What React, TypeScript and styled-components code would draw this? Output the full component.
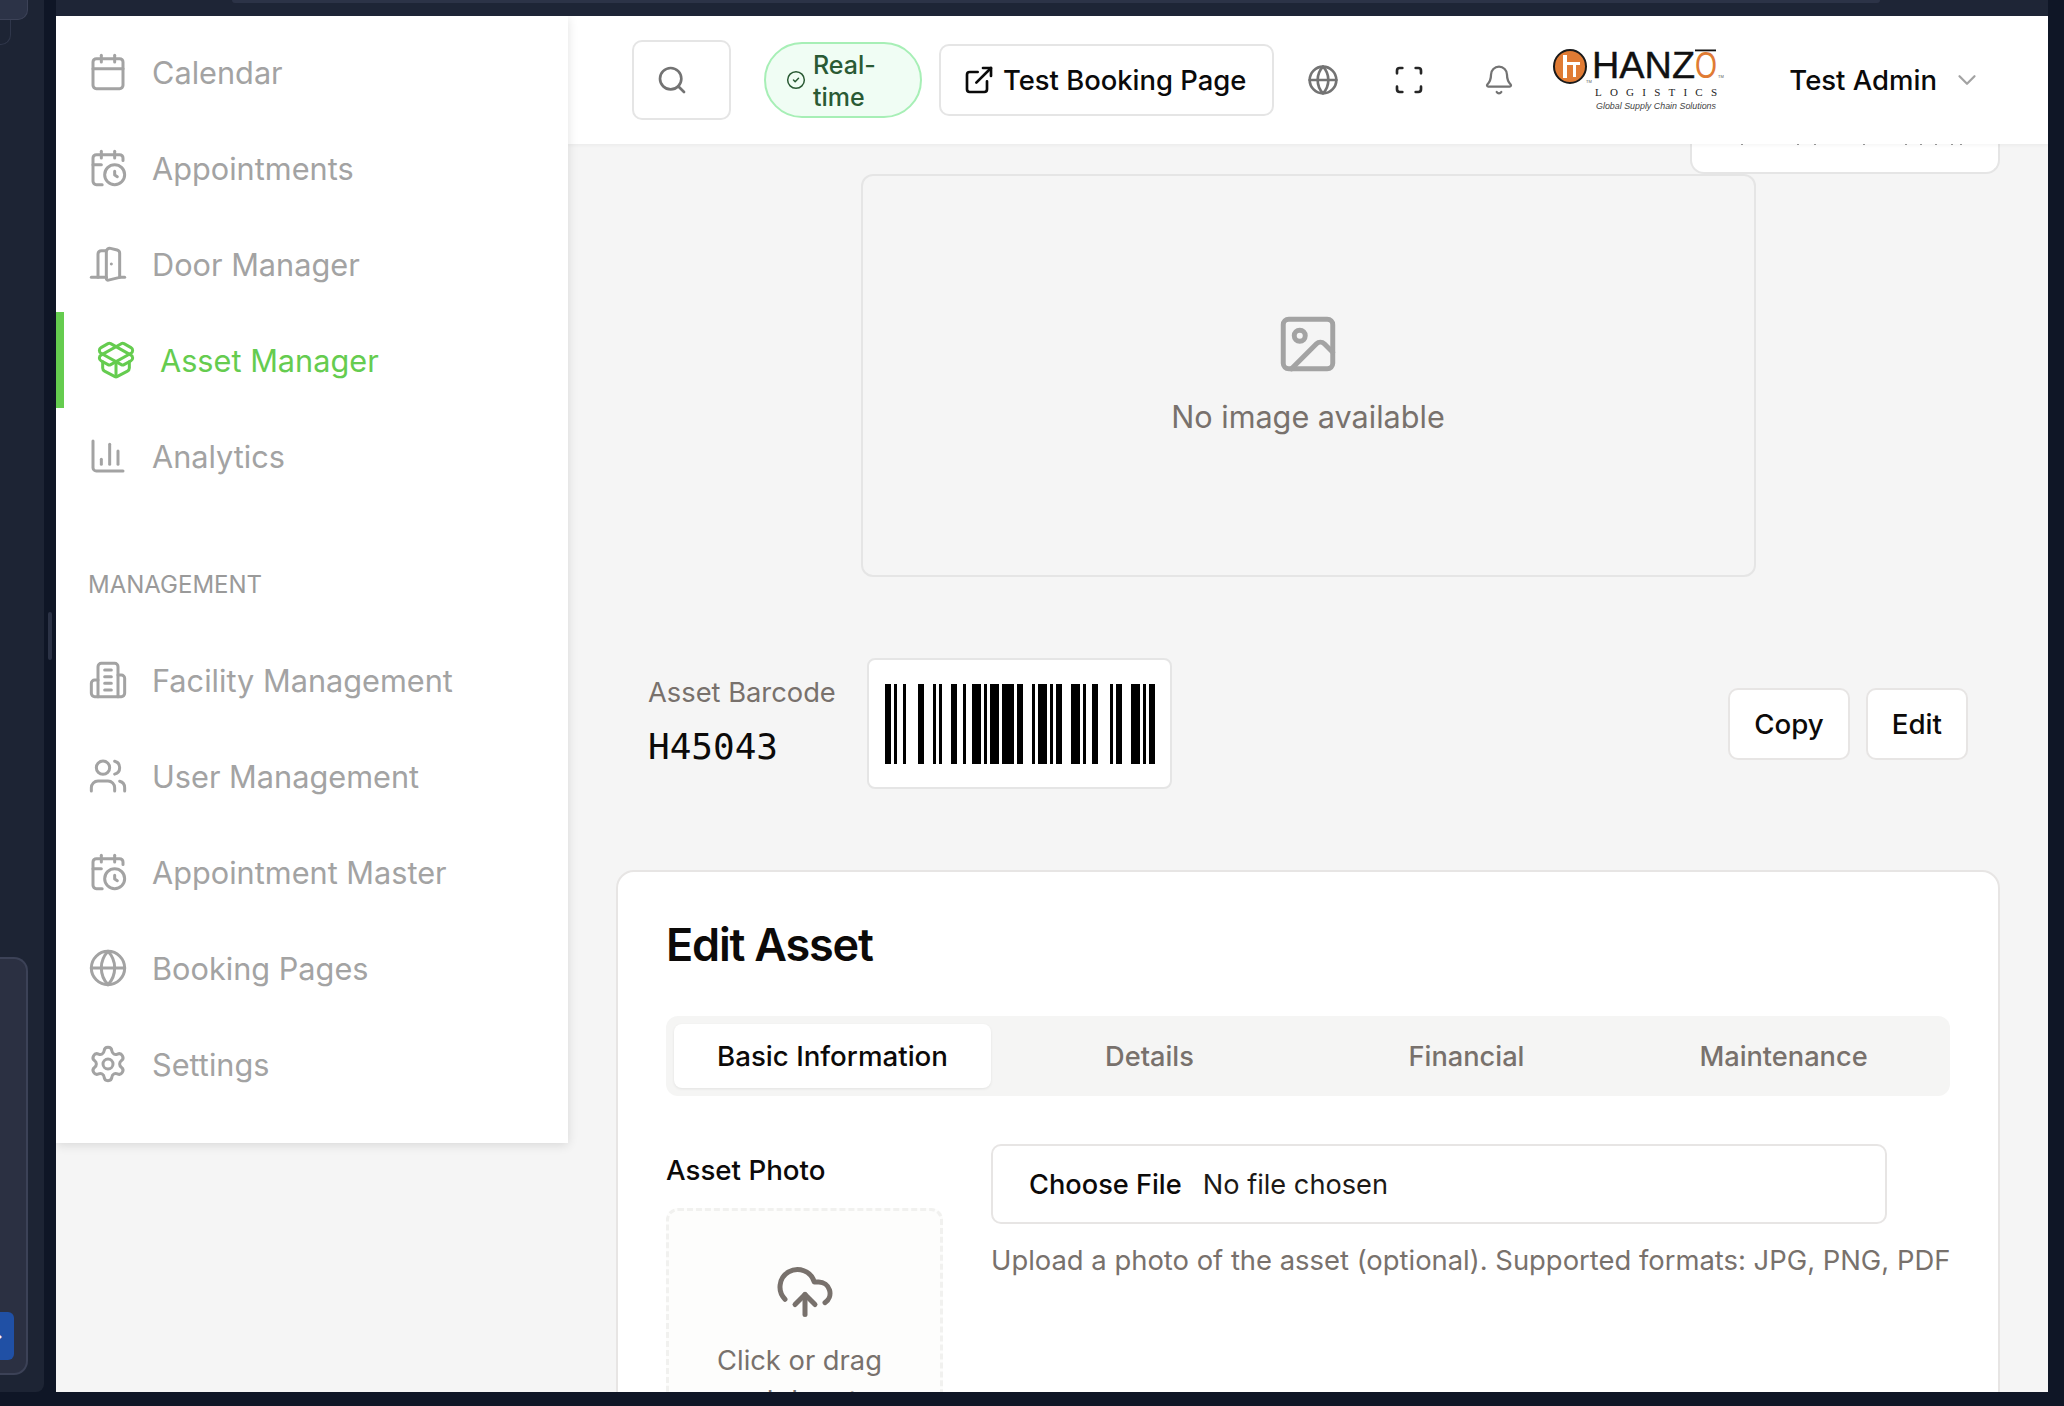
import styled, { createGlobalStyle } from "styled-components";
import {
  Bell,
  Calendar,
  CalendarClock,
  ChartColumn,
  ChevronDown,
  CircleCheck,
  CloudUpload,
  DoorOpen,
  ExternalLink,
  Globe,
  Image as ImageIcon,
  PackageOpen,
  Scan,
  Search,
  Settings,
  Users,
} from "lucide-react";

const GlobalStyle = createGlobalStyle`
  html, body {
    margin: 0;
    padding: 0;
    width: 2064px;
    height: 1406px;
    overflow: hidden;
    background: #0f1626;
    font-family: Inter, "Liberation Sans", sans-serif;
  }
  * { box-sizing: border-box; }
`;

const Page = styled.div`
  display: flex;
  width: 2064px;
  height: 1406px;
  background: #0f1626;
`;

const LeftRail = styled.div`
  width: 44px;
  height: 1392px;
  display: flex;
  flex-direction: column;
  background: #1d2434;
  border-bottom-right-radius: 8px;
`;

const RailStub = styled.div`
  width: 28px;
  height: 20px;
  background: #2c3347;
  border: 1px solid #3c4257;
  border-top: none;
  border-left: none;
  border-bottom-right-radius: 10px;
`;

const RailOutline = styled.div`
  width: 11px;
  height: 25px;
  border: 1px solid #2f364a;
  border-top: none;
  border-left: none;
  border-bottom-right-radius: 10px;
`;

const RailPanel = styled.div`
  width: 28px;
  height: 418px;
  margin-top: 912px;
  display: flex;
  align-items: flex-end;
  padding-bottom: 13px;
  background: #2b3042;
  border: 2px solid #3c4257;
  border-left: none;
  border-radius: 0 14px 14px 0;
`;

const RailButton = styled.div`
  width: 14px;
  height: 48px;
  display: flex;
  align-items: center;
  color: #fff;
  font-size: 16px;
  font-weight: 700;
  line-height: 1;
  text-indent: -12px;
  background: #2050a5;
  border-radius: 0 6px 6px 0;
  overflow: hidden;
`;

const Gutter = styled.div`
  width: 12px;
  padding: 612px 4px 0;
`;

const GutterThumb = styled.div`
  width: 4px;
  height: 48px;
  background: #2b3245;
  border-radius: 2px;
`;

const Center = styled.div`
  width: 1992px;
  display: flex;
  flex-direction: column;
`;

const TopStrip = styled.div`
  height: 16px;
  padding: 0 168px 0 176px;
  background: #1e2536;
`;

const TopStripBar = styled.div`
  height: 3px;
  background: #2c3347;
  border-radius: 0 0 4px 4px;
`;

const AppWindow = styled.div`
  height: 1376px;
  display: flex;
  background: #f5f5f5;
  overflow: hidden;
`;

const Sidebar = styled.aside`
  position: relative;
  z-index: 3;
  width: 512px;
  height: 1127px;
  flex-shrink: 0;
  padding-top: 8px;
  background: #fff;
  box-shadow: 0 2px 10px rgba(0, 0, 0, 0.12);
`;

const NavItem = styled.div<{ $active?: boolean }>`
  height: 96px;
  display: flex;
  align-items: center;
  gap: 24px;
  padding-left: 32px;
  font-size: 30.7px;
  color: ${(p) => (p.$active ? "#65cc4f" : "#a3a3a3")};
  border-left: ${(p) => (p.$active ? "8px solid #65cc4f" : "none")};

  svg {
    flex-shrink: 0;
  }
`;

const NavHeading = styled.div`
  height: 36px;
  margin: 62px 0 30px;
  padding-left: 32px;
  font-size: 24px;
  line-height: 37px;
  color: #9a9a9a;
`;

const Main = styled.div`
  flex: 1;
  min-width: 0;
  display: flex;
  flex-direction: column;
`;

const Topbar = styled.header`
  position: relative;
  z-index: 2;
  height: 128px;
  flex-shrink: 0;
  display: flex;
  align-items: center;
  padding-left: 64px;
  background: #fff;
  box-shadow: 0 1px 4px rgba(0, 0, 0, 0.05);
`;

const SearchBox = styled.div`
  width: 99px;
  height: 80px;
  display: flex;
  align-items: center;
  padding-left: 22px;
  color: #737373;
  border: 2px solid #e5e5e5;
  border-radius: 10px;
`;

const LivePill = styled.div`
  width: 158px;
  height: 76px;
  margin-left: 33px;
  display: flex;
  align-items: center;
  gap: 7px;
  padding: 2px 0 0 20px;
  font-size: 25px;
  font-weight: 500;
  line-height: 32px;
  color: #2a5a34;
  background: #f0fdf4;
  border: 2px solid #a7efb6;
  border-radius: 38px;

  svg {
    margin-top: -2px;
  }
`;

const LiveText = styled.span`
  width: 80px;
`;

const OutlineButton = styled.button`
  height: 72px;
  margin-left: 17px;
  display: flex;
  align-items: center;
  gap: 8px;
  padding: 0 26px 0 22px;
  font-family: inherit;
  font-size: 27.4px;
  font-weight: 500;
  color: #0a0a0a;
  background: #fff;
  border: 2px solid #e5e5e5;
  border-radius: 10px;
`;

const IconSlot = styled.div<{ $gap: number; $color?: string }>`
  width: 32px;
  height: 32px;
  margin-left: ${(p) => p.$gap}px;
  color: ${(p) => p.$color || "#737373"};
`;

const LogoWrap = styled.div`
  width: 172px;
  height: 62px;
  margin-left: 38px;
`;

const UserMenu = styled.div`
  margin-left: 64px;
  display: flex;
  align-items: center;
  gap: 15px;
  font-size: 27.5px;
  font-weight: 500;
  color: #0a0a0a;

  svg {
    color: #a3a3a3;
  }
`;

const Content = styled.div`
  flex: 1;
  display: flex;
  flex-direction: column;
  padding: 0 48px;
  overflow: hidden;
`;

const PeekCard = styled.div`
  width: 310px;
  height: 30px;
  flex-shrink: 0;
  align-self: flex-end;
  padding-left: 48px;
  background: #fff;
  border: 2px solid #e5e5e5;
  border-top: none;
  border-radius: 0 0 14px 14px;

  svg {
    display: block;
  }
`;

const ImageBox = styled.div`
  width: 895px;
  height: 403px;
  flex-shrink: 0;
  align-self: center;
  display: flex;
  flex-direction: column;
  align-items: center;
  justify-content: center;
  gap: 19px;
  padding-bottom: 2px;
  color: #a3a3a3;
  background: #f5f5f5;
  border: 2px solid #e5e5e5;
  border-radius: 12px;
`;

const ImageCaption = styled.div`
  font-size: 30.6px;
  line-height: 42px;
  color: #78716c;
`;

const BarcodeRow = styled.div`
  height: 131px;
  flex-shrink: 0;
  margin-top: 81px;
  display: flex;
  align-items: center;
  padding: 0 32px 0 32px;
`;

const BarcodeInfo = styled.div`
  width: 219px;
  display: flex;
  flex-direction: column;
  gap: 16px;
  margin-top: -3px;
`;

const BarcodeLabel = styled.div`
  font-size: 27.3px;
  line-height: 34px;
  color: #78716c;
`;

const BarcodeValue = styled.div`
  font-family: "DejaVu Sans Mono", "Liberation Mono", monospace;
  font-size: 36px;
  line-height: 42px;
  color: #0c0a09;
`;

const BarcodeBox = styled.div`
  width: 305px;
  height: 131px;
  display: flex;
  align-items: center;
  justify-content: center;
  background: #fff;
  border: 2px solid #e5e5e5;
  border-radius: 8px;
`;

const RowActions = styled.div`
  margin-left: auto;
  display: flex;
  gap: 16px;
`;

const SmallButton = styled.button`
  height: 72px;
  padding: 0 24px;
  font-family: inherit;
  font-size: 27.7px;
  font-weight: 500;
  color: #0c0a09;
  background: #fff;
  border: 2px solid #e7e5e4;
  border-radius: 10px;
`;

const EditCard = styled.section`
  flex-shrink: 0;
  margin-top: 81px;
  height: 640px;
  padding: 40px 48px;
  background: #fff;
  border: 2px solid #e7e5e4;
  border-radius: 18px;
`;

const CardTitle = styled.h2`
  margin: 0;
  font-size: 45px;
  font-weight: 600;
  line-height: 66px;
  letter-spacing: -1.2px;
  color: #0c0a09;
`;

const TabList = styled.div`
  height: 80px;
  margin-top: 38px;
  display: grid;
  grid-template-columns: repeat(4, 1fr);
  padding: 8px;
  background: #f5f5f4;
  border-radius: 12px;
`;

const Tab = styled.div<{ $active?: boolean }>`
  display: flex;
  align-items: center;
  justify-content: center;
  font-size: ${(p) => (p.$active ? "27.7px" : "27.2px")};
  font-weight: 500;
  color: ${(p) => (p.$active ? "#0c0a09" : "#78716c")};
  background: ${(p) => (p.$active ? "#fff" : "transparent")};
  border-radius: 8px;
  box-shadow: ${(p) => (p.$active ? "0 1px 3px rgba(0,0,0,0.08)" : "none")};
`;

const FormRow = styled.div`
  margin-top: 48px;
  display: grid;
  grid-template-columns: 277px 1fr;
  column-gap: 48px;
`;

const PhotoColumn = styled.div`
  padding-top: 6px;
`;

const FieldLabel = styled.div`
  font-size: 27.7px;
  font-weight: 500;
  line-height: 40px;
  color: #0c0a09;
`;

const UploadZone = styled.div`
  width: 277px;
  margin-top: 18px;
  display: flex;
  flex-direction: column;
  align-items: center;
  padding-top: 51px;
  height: 320px;
  color: #78716c;
  background: #fdfdfc;
  border: 3px dashed #f1f1ef;
  border-radius: 12px;
`;

const UploadText = styled.div`
  width: 200px;
  margin: 19px 10px 0 0;
  font-size: 27.3px;
  line-height: 40px;
  text-align: center;
`;

const FileColumn = styled.div`
  display: flex;
  flex-direction: column;
`;

const FileInput = styled.div`
  width: 896px;
  height: 80px;
  display: flex;
  align-items: center;
  gap: 21px;
  padding-left: 36px;
  font-size: 27.2px;
  color: #1c1917;
  background: #fff;
  border: 2px solid #e7e5e4;
  border-radius: 10px;
`;

const FileButton = styled.span`
  font-weight: 500;
  color: #0c0a09;
`;

const HelpText = styled.div`
  margin-top: 15px;
  font-size: 27.4px;
  line-height: 42px;
  white-space: nowrap;
  color: #78716c;
`;

// tall centre tower with two side wings, the lucide one in this version has a door instead
function TowerIcon({ size, strokeWidth }: { size: number; strokeWidth: number }) {
  return (
    <svg
      width={size}
      height={size}
      viewBox="0 0 24 24"
      fill="none"
      stroke="currentColor"
      strokeWidth={strokeWidth}
      strokeLinecap="round"
      strokeLinejoin="round"
    >
      <path d="M6 22V4a2 2 0 0 1 2-2h8a2 2 0 0 1 2 2v18Z" />
      <path d="M6 12H4a2 2 0 0 0-2 2v6a2 2 0 0 0 2 2h2" />
      <path d="M18 9h2a2 2 0 0 1 2 2v9a2 2 0 0 1-2 2h-2" />
      <path d="M10 6h4M10 10h4M10 14h4M10 18h4" />
    </svg>
  );
}

const mainNav = [
  { label: "Calendar", Icon: Calendar },
  { label: "Appointments", Icon: CalendarClock },
  { label: "Door Manager", Icon: DoorOpen },
  { label: "Asset Manager", Icon: PackageOpen, active: true },
  { label: "Analytics", Icon: ChartColumn },
];

const managementNav = [
  { label: "Facility Management", Icon: TowerIcon },
  { label: "User Management", Icon: Users },
  { label: "Appointment Master", Icon: CalendarClock },
  { label: "Booking Pages", Icon: Globe },
  { label: "Settings", Icon: Settings },
];

const tabs = ["Basic Information", "Details", "Financial", "Maintenance"];

// start / end of each bar, in 3px modules
const bars = [
  [0, 2], [3, 4], [6, 7], [11, 13], [16, 17], [18, 19], [22, 24], [26, 27], [29, 32],
  [33, 34], [35, 38], [39, 43], [44, 46], [49, 50], [51, 54], [55, 56], [57, 59], [62, 65],
  [66, 67], [69, 71], [75, 76], [77, 79], [82, 85], [86, 87], [88, 90],
];

const peekMarks = [1, 57, 74, 123, 165, 180, 195, 211, 220];

function Barcode() {
  return (
    <svg width="270" height="80" viewBox="0 0 90 80" preserveAspectRatio="none">
      {bars.map(([a, b]) => (
        <rect key={a} x={a} y="0" width={b - a} height="80" fill="#000" />
      ))}
    </svg>
  );
}

function HanzoLogo() {
  return (
    <svg width="172" height="62" viewBox="0 0 172 62">
      <ellipse cx="17" cy="17.5" rx="16" ry="16.5" fill="#e07b34" stroke="#1a1a1a" strokeWidth="2" />
      <path d="M10 6h4v23h-4zM14 13h13v3h-4v12h-3V16h-6z" fill="#fff" />
      <text x="39" y="29" fontFamily="Liberation Sans, sans-serif" fontSize="36" fill="#111" stroke="#111" strokeWidth="0.4" textLength="103" lengthAdjust="spacingAndGlyphs">HANZ</text>
      <text x="142" y="29" fontFamily="Liberation Sans, sans-serif" fontSize="36" fill="#e07b34" textLength="22" lengthAdjust="spacingAndGlyphs">O</text>
      <rect x="142" y="0.5" width="21" height="1.8" fill="#111" />
      <text x="33" y="34" fontFamily="Liberation Sans, sans-serif" fontSize="4" fill="#555">TM</text>
      <text x="165" y="29" fontFamily="Liberation Sans, sans-serif" fontSize="4" fill="#555">TM</text>
      <text x="42" y="47" fontFamily="Liberation Serif, serif" fontSize="11" fill="#222" textLength="122" lengthAdjust="spacing">LOGISTICS</text>
      <text x="43" y="60" fontFamily="Liberation Sans, sans-serif" fontStyle="italic" fontSize="9" fill="#444" textLength="120" lengthAdjust="spacingAndGlyphs">Global Supply Chain Solutions</text>
    </svg>
  );
}

export default function App() {
  return (
    <>
      <GlobalStyle />
      <Page>
        <LeftRail>
          <RailStub />
          <RailOutline />
          <RailPanel>
            <RailButton>→</RailButton>
          </RailPanel>
        </LeftRail>
        <Gutter>
          <GutterThumb />
        </Gutter>
        <Center>
          <TopStrip>
            <TopStripBar />
          </TopStrip>
          <AppWindow>
            <Sidebar>
              {mainNav.map(({ label, Icon, active }) => (
                <NavItem key={label} $active={active}>
                  <Icon size={40} strokeWidth={1.8} />
                  {label}
                </NavItem>
              ))}
              <NavHeading>MANAGEMENT</NavHeading>
              {managementNav.map(({ label, Icon }) => (
                <NavItem key={label}>
                  <Icon size={40} strokeWidth={1.8} />
                  {label}
                </NavItem>
              ))}
            </Sidebar>
            <Main>
              <Topbar>
                <SearchBox>
                  <Search size={32} />
                </SearchBox>
                <LivePill>
                  <CircleCheck size={20} strokeWidth={1.8} />
                  <LiveText>Real-time</LiveText>
                </LivePill>
                <OutlineButton>
                  <ExternalLink size={32} />
                  Test Booking Page
                </OutlineButton>
                <IconSlot $gap={33}>
                  <Globe size={32} />
                </IconSlot>
                <IconSlot $gap={54} $color="#262626">
                  <Scan size={32} />
                </IconSlot>
                <IconSlot $gap={58}>
                  <Bell size={32} strokeWidth={1.7} />
                </IconSlot>
                <LogoWrap>
                  <HanzoLogo />
                </LogoWrap>
                <UserMenu>
                  Test Admin
                  <ChevronDown size={30} strokeWidth={1.8} />
                </UserMenu>
              </Topbar>
              <Content>
                <PeekCard>
                  <svg width="240" height="2">
                    {peekMarks.map((x) => (
                      <rect key={x} x={x} y="0" width="2" height="1" fill="#999" />
                    ))}
                  </svg>
                </PeekCard>
                <ImageBox>
                  <ImageIcon size={66} strokeWidth={1.8} />
                  <ImageCaption>No image available</ImageCaption>
                </ImageBox>
                <BarcodeRow>
                  <BarcodeInfo>
                    <BarcodeLabel>Asset Barcode</BarcodeLabel>
                    <BarcodeValue>H45043</BarcodeValue>
                  </BarcodeInfo>
                  <BarcodeBox>
                    <Barcode />
                  </BarcodeBox>
                  <RowActions>
                    <SmallButton>Copy</SmallButton>
                    <SmallButton>Edit</SmallButton>
                  </RowActions>
                </BarcodeRow>
                <EditCard>
                  <CardTitle>Edit Asset</CardTitle>
                  <TabList>
                    {tabs.map((t, i) => (
                      <Tab key={t} $active={i === 0}>
                        {t}
                      </Tab>
                    ))}
                  </TabList>
                  <FormRow>
                    <PhotoColumn>
                      <FieldLabel>Asset Photo</FieldLabel>
                      <UploadZone>
                        <CloudUpload size={60} strokeWidth={2} />
                        <UploadText>Click or drag and drop to</UploadText>
                      </UploadZone>
                    </PhotoColumn>
                    <FileColumn>
                      <FileInput>
                        <FileButton>Choose File</FileButton>
                        No file chosen
                      </FileInput>
                      <HelpText>Upload a photo of the asset (optional). Supported formats: JPG, PNG, PDF</HelpText>
                    </FileColumn>
                  </FormRow>
                </EditCard>
              </Content>
            </Main>
          </AppWindow>
        </Center>
      </Page>
    </>
  );
}
